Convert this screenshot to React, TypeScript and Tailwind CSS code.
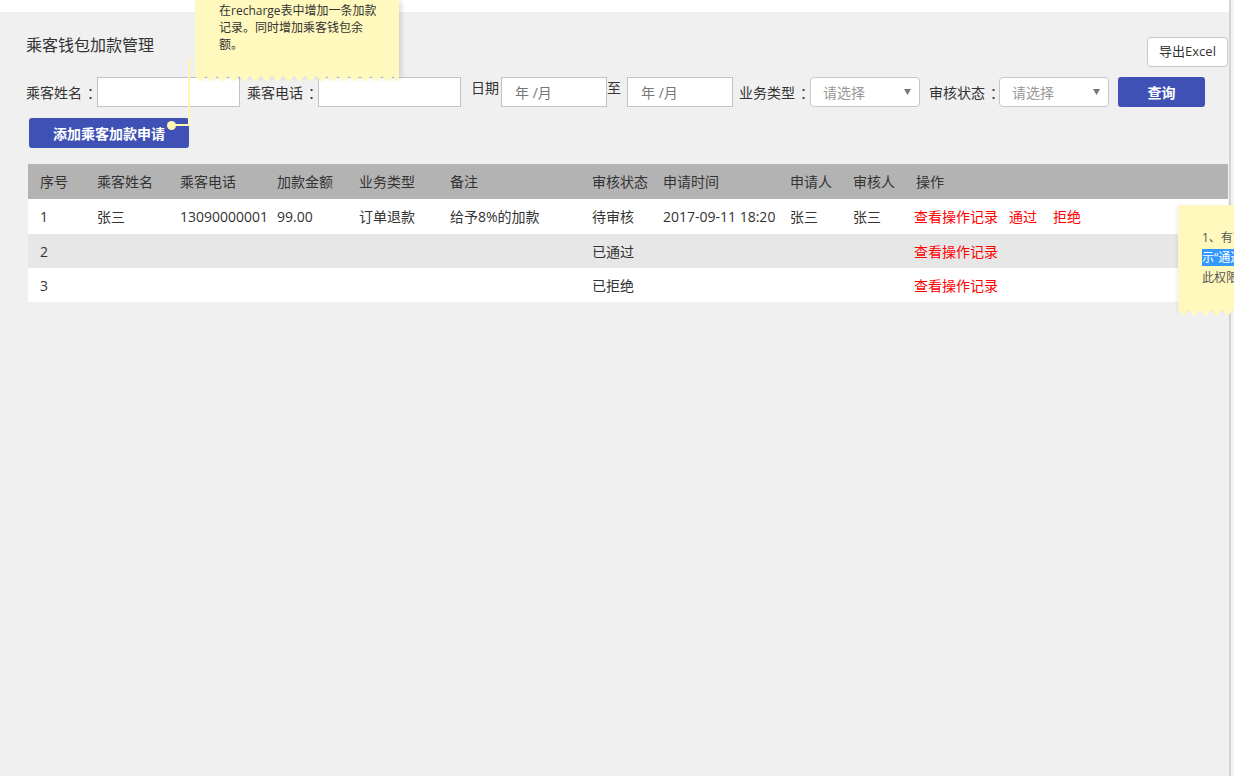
import React from 'react'

const NOTE = '#fff9be'

function Teeth({ width, period = 11, depth = 6 }: { width: number; period?: number; depth?: number }) {
  const pts: string[] = ['0,0']
  for (let x = 0; x < width; x += period) {
    pts.push(`${x + period / 2},${depth}`)
    pts.push(`${Math.min(x + period, width)},0`)
  }
  return (
    <svg width={width} height={depth} className="block">
      <polygon points={pts.join(' ')} fill={NOTE} />
    </svg>
  )
}

function Caret() {
  return (
    <svg width="7" height="6" viewBox="0 0 7 6">
      <polygon points="0,0 7,0 3.5,6" fill="#777" />
    </svg>
  )
}

function Label({ text, className = '' }: { text: string; className?: string }) {
  return (
    <span className={`whitespace-nowrap ${className}`}>
      {text}
      <span className="ml-[5px]">：</span>
    </span>
  )
}

function Select() {
  return (
    <div className="flex h-[30px] w-[110px] items-center justify-between rounded-[4px] border border-[#c8c8c8] bg-white pl-[12px] pr-[8px]">
      <span className="text-[14px] text-[#999]">请选择</span>
      <Caret />
    </div>
  )
}

function DateBox() {
  return (
    <div className="flex h-[30px] w-[106px] items-center border border-[#c3c3c3] bg-white pl-[13px]">
      <span className="whitespace-nowrap text-[14px] text-[#777]">年 /月</span>
    </div>
  )
}

const cols = 'grid grid-cols-[57px_83px_97px_82px_91px_142px_71px_127px_63px_63px_1fr]'

const rows = [
  { id: '1', name: '张三', phone: '13090000001', amount: '99.00', type: '订单退款', note: '给予8%的加款', status: '待审核', time: '2017-09-11 18:20', applicant: '张三', auditor: '张三', pending: true },
  { id: '2', name: '', phone: '', amount: '', type: '', note: '', status: '已通过', time: '', applicant: '', auditor: '', pending: false },
  { id: '3', name: '', phone: '', amount: '', type: '', note: '', status: '已拒绝', time: '', applicant: '', auditor: '', pending: false },
]

export default function App() {
  return (
    <div className="relative flex h-screen w-full overflow-hidden bg-[#f0f0f0] font-['Open_Sans','Noto_Sans_CJK_SC',sans-serif] text-[14px] text-[#333]">
      <div className="w-[1231px] shrink-0 border-r-2 border-[#d4d4d4]">
        <div className="h-[12px] bg-white" />

        <div className="pl-[26px] pt-[22px]">
          {/* title + export */}
          <div className="flex items-start justify-between">
            <h1 className="text-[16px] leading-[22px]">乘客钱包加款管理</h1>
            <button className="mr-[1px] mt-[3px] flex h-[30px] w-[81px] items-center justify-center rounded-[4px] border border-[#c8c8c8] bg-white text-[13px]">
              导出Excel
            </button>
          </div>

          {/* filters */}
          <div className="mt-[10px] flex h-[30px] items-center whitespace-nowrap">
            <Label text="乘客姓名" className="w-[71px]" />
            <div className="h-[30px] w-[143px] border border-[#c3c3c3] bg-white" />
            <Label text="乘客电话" className="ml-[7px] w-[71px]" />
            <div className="h-[30px] w-[143px] border border-[#c3c3c3] bg-white" />
            <span className="ml-[10px] w-[30px] self-start leading-[22px]">日期</span>
            <DateBox />
            <span className="w-[20px] self-start leading-[22px]">至</span>
            <DateBox />
            <Label text="业务类型" className="ml-[6px] w-[71px]" />
            <Select />
            <Label text="审核状态" className="ml-[9px] w-[70px]" />
            <Select />
            <button className="ml-[9px] h-[30px] w-[87px] rounded-[3px] bg-[#3f51b5] font-semibold text-white">查询</button>
          </div>

          <button className="ml-[3px] mt-[11px] h-[30px] w-[160px] rounded-[3px] bg-[#3f51b5] font-semibold text-white">
            添加乘客加款申请
          </button>

          {/* table */}
          <div className="ml-[2px] mt-[16px] w-[1200px] bg-white">
            <div className={`${cols} h-[35px] items-center bg-[#b3b3b3]`}>
              {['序号', '乘客姓名', '乘客电话', '加款金额', '业务类型', '备注', '审核状态', '申请时间', '申请人', '审核人', '操作'].map((h) => (
                <div key={h} className="pl-[12px]">{h}</div>
              ))}
            </div>
            {rows.map((r, i) => (
              <div
                key={r.id}
                className={`${cols} items-center whitespace-nowrap ${i === 0 ? 'h-[35px]' : 'h-[34px]'} ${i === 1 ? 'bg-[#e7e7e7]' : 'bg-white'}`}
              >
                <div className="pl-[12px]">{r.id}</div>
                <div className="pl-[12px]">{r.name}</div>
                <div className="pl-[12px]">{r.phone}</div>
                <div className="pl-[12px]">{r.amount}</div>
                <div className="pl-[12px]">{r.type}</div>
                <div className="pl-[12px]">{r.note}</div>
                <div className="pl-[12px]">{r.status}</div>
                <div className="pl-[12px]">{r.time}</div>
                <div className="pl-[12px]">{r.applicant}</div>
                <div className="pl-[12px]">{r.auditor}</div>
                <div className="pl-[10px] text-[#f00]">
                  <span>查看操作记录</span>
                  {r.pending && (
                    <>
                      <span className="ml-[11px]">通过</span>
                      <span className="ml-[16px]">拒绝</span>
                    </>
                  )}
                </div>
              </div>
            ))}
          </div>
        </div>
      </div>
      <div className="flex-1 bg-[#f3f3f3]" />

      {/* sticky note: recharge */}
      <div className="absolute left-[188px] top-[58px] h-[68px] w-[2px] bg-[#fff6b2]" />
      <div className="absolute left-[175px] top-[124px] h-[2px] w-[14px] bg-[#fff6b2]" />
      <div className="absolute left-[167px] top-[121px] h-[9px] w-[9px] rounded-full bg-[#fff6b2]" />
      <div className="absolute left-[195px] top-0">
        <div className="h-[76px] w-[204px] bg-[#fff9be] pl-[24px] pt-[2px] text-[12px] leading-[17px] text-[#333] shadow-[3px_2px_4px_rgba(0,0,0,0.12)]">
          <div className="whitespace-nowrap">在recharge表中增加一条加款</div>
          <div className="whitespace-nowrap">记录。同时增加乘客钱包余</div>
          <div className="whitespace-nowrap">额。</div>
        </div>
        <Teeth width={204} />
      </div>

      {/* sticky note: permission */}
      <div className="absolute left-[1178px] top-[205px]">
        <div className="h-[105px] w-[220px] bg-[#fff9be] pl-[24px] pt-[23px] text-[12px] leading-[20px] text-[#555] shadow-[-1px_1px_3px_rgba(0,0,0,0.08)]">
          <div className="whitespace-nowrap">1、有审核权限的用户显</div>
          <div className="whitespace-nowrap">
            <span className="bg-[#3399ff] text-white">示“通过”“拒绝”按钮，无</span>
          </div>
          <div className="whitespace-nowrap">此权限不显示。</div>
        </div>
        <Teeth width={220} />
      </div>
    </div>
  )
}
